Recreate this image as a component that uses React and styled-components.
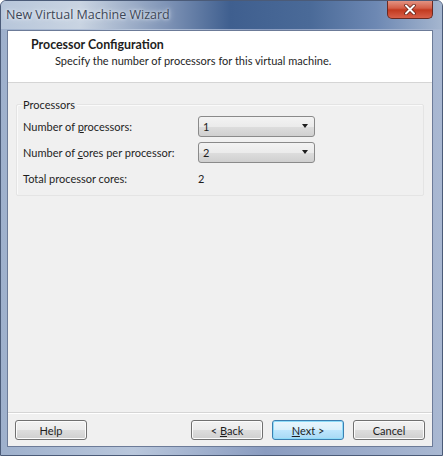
import React from "react";
import styled, { createGlobalStyle } from "styled-components";

const Global = createGlobalStyle`
  html, body { margin: 0; padding: 0; background: #fff; }
  * { box-sizing: border-box; }
`;

const Window = styled.div`
  width: 443px;
  height: 456px;
  display: flex;
  flex-direction: column;
  background: linear-gradient(90deg, #9eb0cc 0%, #b9c7dc 30%, #8a9cc0 60%, #a9b8d2 100%);
  border: 1px solid #4b5b78;
  border-radius: 6px 6px 0 0;
  font-family: Lato, "Open Sans", sans-serif;
  font-size: 11px;
  color: #1e1e1e;
  overflow: hidden;
`;

const TitleBar = styled.div`
  height: 28px;
  flex: none;
  display: flex;
  align-items: flex-start;
  justify-content: space-between;
  padding: 0 9px 0 5px;
  background: linear-gradient(90deg, #b7c6da 0%, #c9d4e2 18%, #7d92b5 38%, #3f5f8f 52%, #4a6a98 70%, #6d88b3 85%, #a5b6cf 100%);
`;

const Title = styled.span`
  margin-top: 5px;
  font-family: "Open Sans", sans-serif;
  font-size: 12.5px;
  color: #3c4656;
  text-shadow: 0 0 6px #e8eef6, 0 0 3px #eef3f8;
`;

const Close = styled.div`
  width: 46px;
  height: 19px;
  margin-top: -1px;
  border: 1px solid #6a2a22;
  border-top: none;
  border-radius: 0 0 5px 5px;
  background: linear-gradient(180deg, #e59a8a 0%, #d45f48 45%, #c23a20 55%, #d8604a 100%);
  display: flex;
  align-items: center;
  justify-content: center;
`;

const Client = styled.div`
  flex: 1;
  margin: 1px 9px 8px 6px;
  display: flex;
  flex-direction: column;
  background: #f0f0f0;
  border: 1px solid #6c7b98;
`;

const Header = styled.div`
  height: 52px;
  flex: none;
  background: #fff;
  border-bottom: 1px solid #d5d5d5;
  padding: 6px 0 0 23px;
  display: flex;
  flex-direction: column;
  gap: 2px;
`;

const HeadTitle = styled.div`
  font-weight: 700;
  font-size: 12.4px;
`;

const HeadSub = styled.div`
  padding-left: 24px;
  font-size: 11px;
`;

const Body = styled.div`
  flex: 1;
  padding: 21px 8px 0 8px;
  display: flex;
  flex-direction: column;
`;

const Group = styled.div`
  height: 92px;
  border: 1px solid #e4e4e4;
  border-radius: 2px;
  box-shadow: inset 1px 1px 0 #fafafa;
  padding: 0 6px;
  display: flex;
  flex-direction: column;
`;

const Legend = styled.div`
  margin-top: -8px;
  align-self: flex-start;
  background: #f0f0f0;
  padding: 0 2px 0 0;
  line-height: 16px;
`;

const Row = styled.div`
  display: grid;
  grid-template-columns: 175px 117px;
  align-items: center;
  height: 26px;
`;

const Underline = styled.span`
  text-decoration: underline;
`;

const Combo = styled.div`
  height: 21px;
  border: 1px solid #8a8a8a;
  border-radius: 3px;
  background: linear-gradient(180deg, #f3f3f3 0%, #ebebeb 50%, #dddddd 51%, #cfcfcf 100%);
  display: flex;
  align-items: center;
  justify-content: space-between;
  padding: 0 6px 0 4px;
`;

const Arrow = styled.span`
  width: 0;
  height: 0;
  border-left: 3.5px solid transparent;
  border-right: 3.5px solid transparent;
  border-top: 4px solid #1e1e1e;
`;

const Footer = styled.div`
  flex: none;
  height: 34px;
  border-top: 1px solid #d5d5d5;
  box-shadow: inset 0 1px 0 #fff;
  display: flex;
  align-items: flex-start;
  padding: 7px 7px 0 7px;
  gap: 9px;
`;

const Button = styled.div`
  width: 72px;
  height: 20px;
  border: 1px solid ${(p) => (p.$default ? "#3c7fb1" : "#707070")};
  border-radius: 3px;
  background: ${(p) =>
    p.$default
      ? "linear-gradient(180deg, #eaf6fd 0%, #d9f0fc 50%, #bee6fd 51%, #a7d9f5 100%)"
      : "linear-gradient(180deg, #f2f2f2 0%, #ebebeb 50%, #dddddd 51%, #cfcfcf 100%)"};
  box-shadow: inset 0 0 0 1px ${(p) => (p.$default ? "#8fdcf9" : "#fcfcfc")};
  display: flex;
  align-items: center;
  justify-content: center;
  margin-left: ${(p) => (p.$push ? "auto" : "0")};
`;

export default function App() {
  return (
    <>
      <Global />
      <Window>
        <TitleBar>
          <Title>New Virtual Machine Wizard</Title>
          <Close>
            <svg width="12" height="11" viewBox="0 0 12 11">
              <path d="M2 1.5 L10 9.5 M10 1.5 L2 9.5" stroke="#5a1a10" strokeWidth="3.4" strokeLinecap="round" />
              <path d="M2 1.5 L10 9.5 M10 1.5 L2 9.5" stroke="#fff" strokeWidth="2" strokeLinecap="round" />
            </svg>
          </Close>
        </TitleBar>
        <Client>
          <Header>
            <HeadTitle>Processor Configuration</HeadTitle>
            <HeadSub>Specify the number of processors for this virtual machine.</HeadSub>
          </Header>
          <Body>
            <Group>
              <Legend>Processors</Legend>
              <Row>
                <span>Number of <Underline>p</Underline>rocessors:</span>
                <Combo><span>1</span><Arrow /></Combo>
              </Row>
              <Row>
                <span>Number of <Underline>c</Underline>ores per processor:</span>
                <Combo><span>2</span><Arrow /></Combo>
              </Row>
              <Row>
                <span>Total processor cores:</span>
                <span>2</span>
              </Row>
            </Group>
          </Body>
          <Footer>
            <Button><span>Help</span></Button>
            <Button $push><span>&lt; <Underline>B</Underline>ack</span></Button>
            <Button $default><span><Underline>N</Underline>ext &gt;</span></Button>
            <Button><span>Cancel</span></Button>
          </Footer>
        </Client>
      </Window>
    </>
  );
}
